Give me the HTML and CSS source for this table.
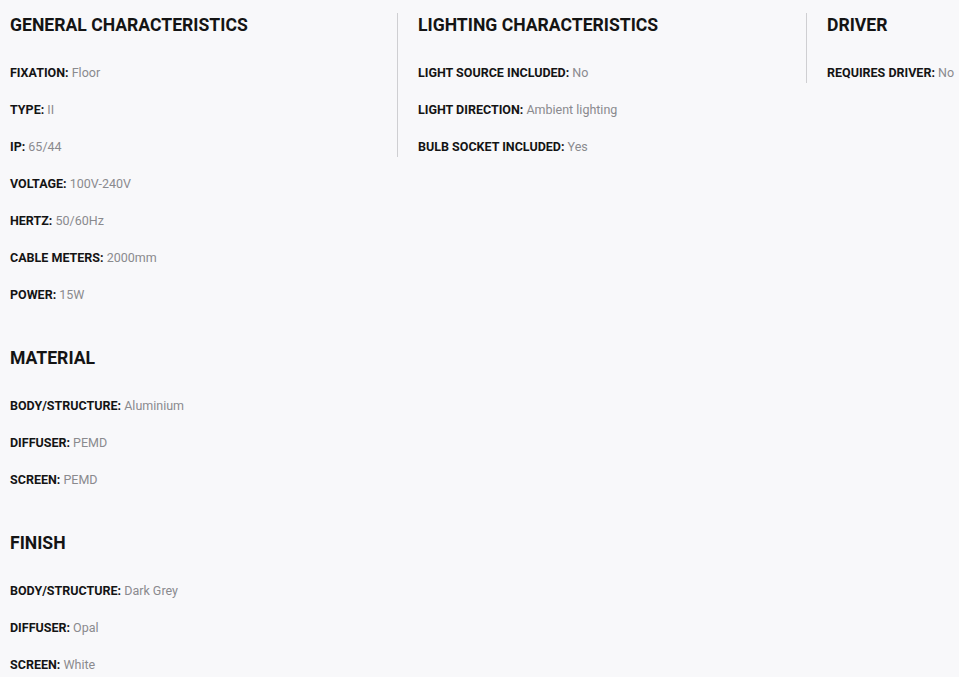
FILE: index.html
```html
<!DOCTYPE html>
<html lang="en">
<head>
<meta charset="utf-8">
<title>Specifications</title>
<link rel="stylesheet" href="styles.css">
</head>
<body>
<div class="specs">
  <div class="col col-first">
    <section class="group">
      <h3 class="group-title">GENERAL CHARACTERISTICS</h3>
      <div class="rows">
        <p class="row"><span class="label">FIXATION:</span> <span class="value">Floor</span></p>
        <p class="row"><span class="label">TYPE:</span> <span class="value">II</span></p>
        <p class="row"><span class="label">IP:</span> <span class="value">65/44</span></p>
        <p class="row"><span class="label">VOLTAGE:</span> <span class="value">100V-240V</span></p>
        <p class="row"><span class="label">HERTZ:</span> <span class="value">50/60Hz</span></p>
        <p class="row"><span class="label">CABLE METERS:</span> <span class="value">2000mm</span></p>
        <p class="row"><span class="label">POWER:</span> <span class="value">15W</span></p>
      </div>
    </section>
    <section class="group">
      <h3 class="group-title">MATERIAL</h3>
      <div class="rows">
        <p class="row"><span class="label">BODY/STRUCTURE:</span> <span class="value">Aluminium</span></p>
        <p class="row"><span class="label">DIFFUSER:</span> <span class="value">PEMD</span></p>
        <p class="row"><span class="label">SCREEN:</span> <span class="value">PEMD</span></p>
      </div>
    </section>
    <section class="group">
      <h3 class="group-title">FINISH</h3>
      <div class="rows">
        <p class="row"><span class="label">BODY/STRUCTURE:</span> <span class="value">Dark Grey</span></p>
        <p class="row"><span class="label">DIFFUSER:</span> <span class="value">Opal</span></p>
        <p class="row"><span class="label">SCREEN:</span> <span class="value">White</span></p>
      </div>
    </section>
  </div>
  <div class="col col-mid">
    <section class="group">
      <h3 class="group-title">LIGHTING CHARACTERISTICS</h3>
      <div class="rows">
        <p class="row"><span class="label">LIGHT SOURCE INCLUDED:</span> <span class="value">No</span></p>
        <p class="row"><span class="label">LIGHT DIRECTION:</span> <span class="value">Ambient lighting</span></p>
        <p class="row"><span class="label">BULB SOCKET INCLUDED:</span> <span class="value">Yes</span></p>
      </div>
    </section>
  </div>
  <div class="col col-last">
    <section class="group">
      <h3 class="group-title">DRIVER</h3>
      <div class="rows">
        <p class="row"><span class="label">REQUIRES DRIVER:</span> <span class="value">No</span></p>
      </div>
    </section>
  </div>
</div>
</body>
</html>
```
FILE: styles.css
```css
html, body {
  margin: 0;
  padding: 0;
  background: #f8f8fa;
}
body {
  font-family: Roboto, "Liberation Sans", Arial, sans-serif;
  color: #1a1a1a;
  overflow: hidden;
}
.specs {
  display: grid;
  grid-template-columns: 387px 409px 1fr;
  align-items: start;
  padding: 13px 0 0 10px;
}
.col {
  display: flex;
  flex-direction: column;
  gap: 41px;
}
.col-mid,
.col-last {
  border-left: 1px solid #cfcfd2;
  padding-left: 20px;
}
.group {
  display: flex;
  flex-direction: column;
  gap: 26px;
}
.group-title {
  margin: 0;
  font-size: 17.6px;
  line-height: 24px;
  font-weight: 700;
  color: #141414;
  letter-spacing: 0;
}
.rows {
  display: flex;
  flex-direction: column;
  gap: 17px;
}
.row {
  margin: 0;
  font-size: 12.5px;
  line-height: 20px;
  white-space: nowrap;
}
.label {
  font-weight: 700;
  color: #141414;
}
.value {
  color: #8a8a8e;
}
```
